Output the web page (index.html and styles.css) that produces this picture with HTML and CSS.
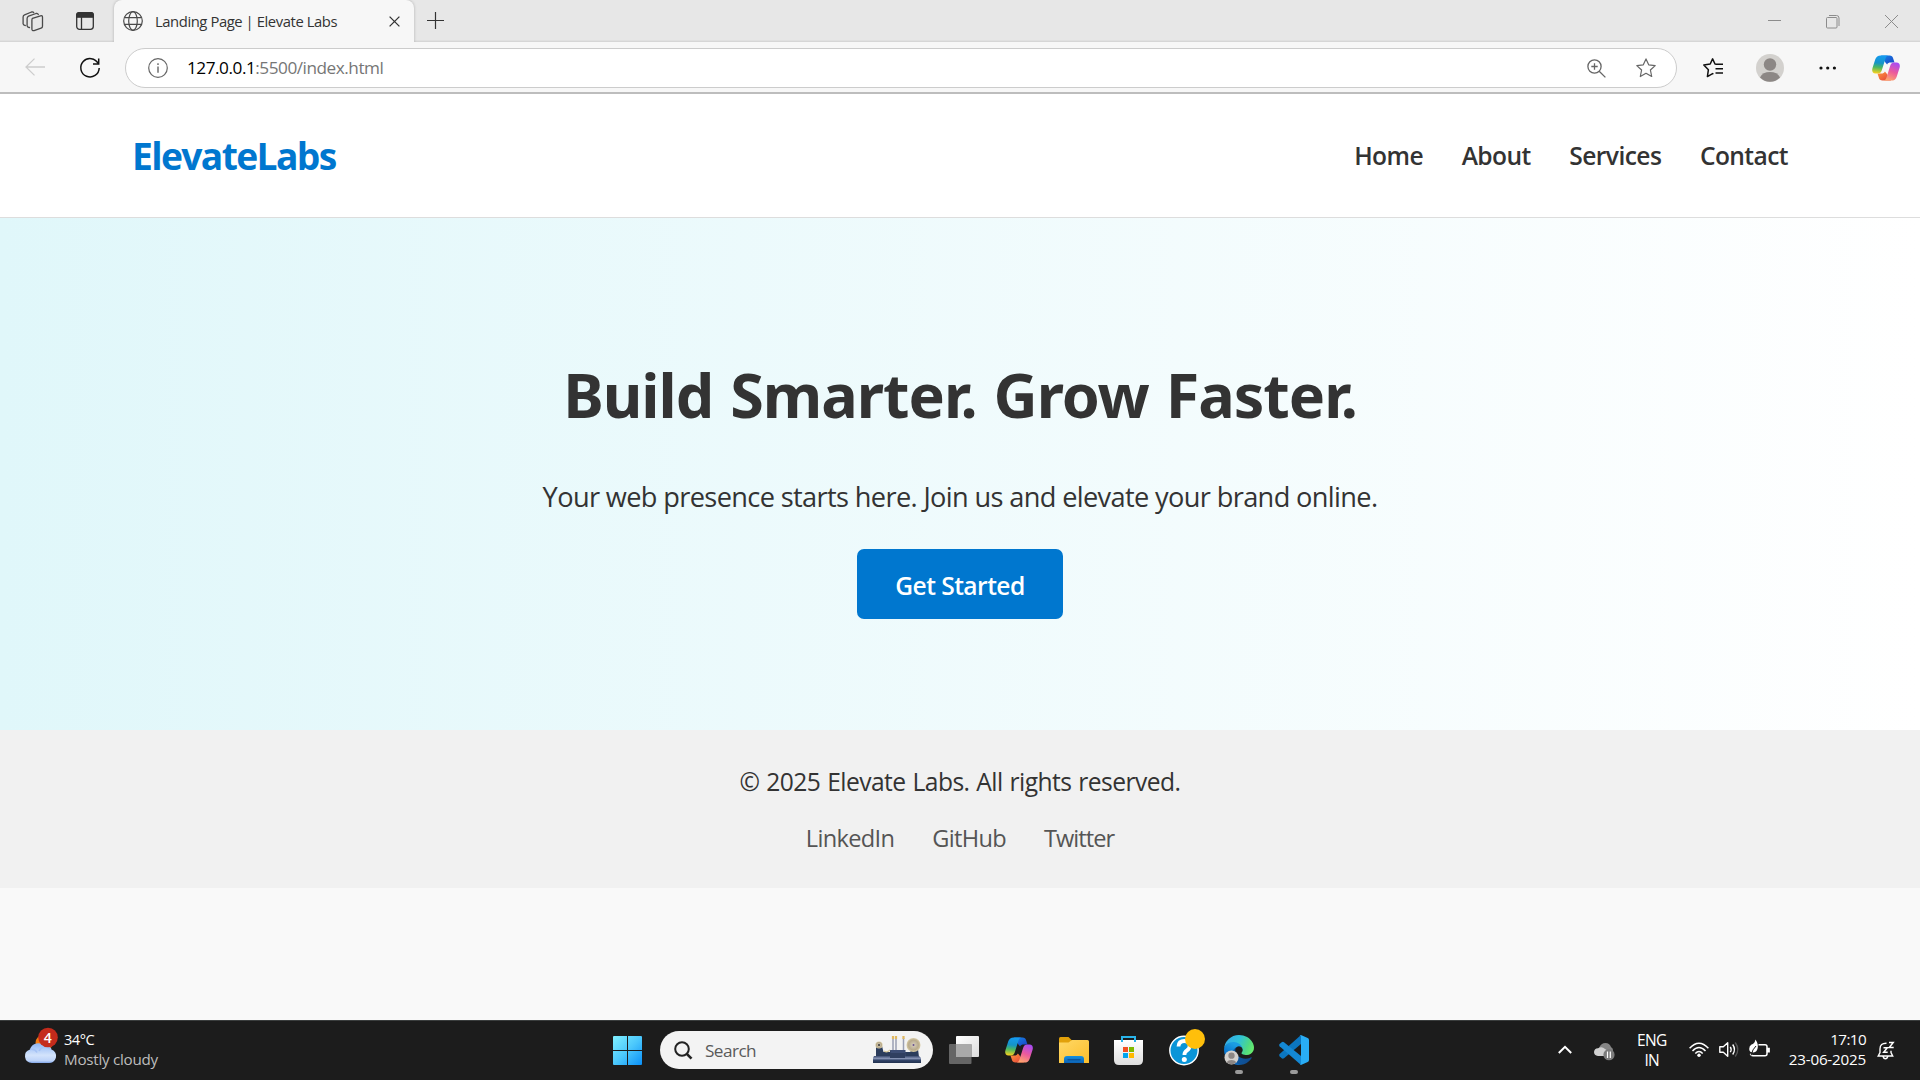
FILE: index.html
```html
<!DOCTYPE html>
<html lang="en">
<head>
<meta charset="utf-8">
<title>Landing Page | Elevate Labs</title>
<link rel="stylesheet" href="styles.css">
</head>
<body>
<svg class="defs" width="0" height="0" aria-hidden="true">
  <defs>
    <linearGradient id="cpA" x1="0.3" y1="0" x2="0.2" y2="1"><stop offset="0" stop-color="#159bf0"/><stop offset=".4" stop-color="#1594c8"/><stop offset=".65" stop-color="#4cb860"/><stop offset="1" stop-color="#ffd21c"/></linearGradient>
    <linearGradient id="cpB" x1="0.7" y1="0" x2="0.3" y2="1"><stop offset="0" stop-color="#a94bf2"/><stop offset=".5" stop-color="#ec5a9c"/><stop offset="1" stop-color="#ffa96b"/></linearGradient>
    <linearGradient id="cpC" x1="0" y1="0" x2="1" y2="1"><stop offset="0" stop-color="#1689e8"/><stop offset="1" stop-color="#1b3fc4"/></linearGradient>
    <linearGradient id="cpD" x1="0" y1="0" x2="1" y2="1"><stop offset="0" stop-color="#ff9a3c"/><stop offset="1" stop-color="#e23b3b"/></linearGradient>
    <symbol id="copilot" viewBox="0 0 28 26">
      <path d="M9 .4h8.600c2 0 3 1 3.500 2.800l1.400 4.400h-3.700c-2 0-3 .6-3.700 2L13 7z" fill="url(#cpC)"/>
      <path d="M19 25.600h-8.600c-2 0-3-1-3.500-2.800L5.500 18.400h3.700c2 0 3-.6 3.700-2L15 19z" fill="url(#cpD)"/>
      <path d="M8.800.4h8c-1.800 0-2.700 1.200-3.300 3l-3.700 11.800c-.8 2.300-1.900 3.300-4.100 3.300H3.500C.4 18.500-.4 16 .5 12.900L3.300 4.300C4.200 1.600 5.800.4 8.800.4z" fill="url(#cpA)"/>
      <path d="M19.200 25.600h-8c1.800 0 2.700-1.200 3.300-3l3.700-11.800c.8-2.300 1.900-3.300 4.100-3.300h2.200c3.100 0 3.900 2.500 3 5.600l-2.800 8.600c-.9 2.700-2.500 3.900-5.500 3.900z" fill="url(#cpB)"/>
    </symbol>
  </defs>
</svg>

<div class="tabstrip">
  <svg class="ic workspaces" width="22" height="22" viewBox="0 0 22 22" fill="none" stroke="#4a4a4a" stroke-width="1.300" stroke-linejoin="round" stroke-linecap="round">
    <path d="M10.500 8.300 18.500 5.800q2-.5 2 1.400v9q0 1.500-1.400 2l-7 2.400q-2 .5-2.200-1.300v-9q0-1.500.6-2z"/>
    <path d="M7.500 17.500q-2 .2-2.400-1.600V8.400q0-1.500 1.500-2.200L14 3.500q1.800-.4 2.300 1"/>
    <path d="M3.300 15.500q-1.800 0-2.200-1.600V6.900q0-1.500 1.500-2.100L9.500 2q1.600-.4 2.200.6"/>
  </svg>
  <svg class="ic vtabs" width="18" height="18" viewBox="0 0 18 18" fill="none" stroke="#333" stroke-width="1.300">
    <rect x=".7" y=".7" width="16.600" height="16.600" rx="2.800"/><path d="M.7 5.200V3Q.7.700 3 .7h12q2.300 0 2.300 2.300v2.200z" fill="#333"/><path d="M5.500 5v12"/>
  </svg>
  <div class="tab">
    <svg class="ic" width="20" height="20" viewBox="0 0 20 20" fill="none" stroke="#4a4a4a" stroke-width="1.200"><circle cx="10" cy="10" r="9.300"/><ellipse cx="10" cy="10" rx="4.300" ry="9.300"/><path d="M1.500 6.600h17M1.500 13.400h17"/></svg>
    <span class="tab-title">Landing Page | Elevate Labs</span>
    <svg class="ic" width="11" height="11" viewBox="0 0 11 11" stroke="#333" stroke-width="1.300"><path d="M.6.600l9.800 9.800M10.400.600.6 10.400"/></svg>
  </div>
  <svg class="ic plus" width="17" height="17" viewBox="0 0 17 17" stroke="#333" stroke-width="1.200"><path d="M8.500 0v17M0 8.500h17"/></svg>
  <div class="winctl">
    <svg width="13" height="14" viewBox="0 0 13 14" stroke="#8c8c8c"><path d="M0 5.500h13"/></svg>
    <svg width="14" height="14" viewBox="0 0 14 14" fill="none" stroke="#8c8c8c"><rect x=".5" y="2.500" width="10.500" height="10.500" rx="1"/><path d="M3 .5h7.500q2.500 0 2.500 2.500V11"/></svg>
    <svg width="13" height="14" viewBox="0 0 13 14" stroke="#8c8c8c"><path d="M0 0l13 13M13 0l-13 13"/></svg>
  </div>
</div>

<div class="toolbar">
  <svg class="ic back" width="20" height="18" viewBox="0 0 20 18" fill="none" stroke="#cdcdcd" stroke-width="1.300"><path d="M20 9H1M9.500.600 1 9l8.500 8.400"/></svg>
  <svg class="ic reload" width="20" height="20" viewBox="0 0 20 20" fill="none" stroke="#111" stroke-width="1.500"><path d="M18.200 5.600A9.200 9.200 0 1 0 19.200 10"/><path d="M18.700.5v5.600H13"/></svg>
  <div class="address">
    <svg class="ic" width="20" height="20" viewBox="0 0 20 20" fill="none" stroke="#666" stroke-width="1.200"><circle cx="10" cy="10" r="9.300"/><path d="M10 8.600v6.200M10 5.300v1.700" stroke-width="1.400"/></svg>
    <span class="url"><span class="host">127.0.0.1</span>:5500/index.html</span>
    <svg class="ic mag" width="19" height="19" viewBox="0 0 19 19" fill="none" stroke="#666" stroke-width="1.300"><circle cx="7.500" cy="7.500" r="6.600"/><path d="M12.200 12.200 18.400 18.400M7.500 4.300v6.400M4.300 7.500h6.400"/></svg>
    <svg class="ic" width="20" height="20" viewBox="0 0 20 20" fill="none" stroke="#666" stroke-width="1.200" stroke-linejoin="round"><path d="M10 .9l2.700 5.900 6.500.8-4.800 4.400 1.300 6.500L10 15.300l-5.700 3.200L5.600 12 .8 7.600l6.500-.8z"/></svg>
  </div>
  <svg class="ic favs" width="20" height="20" viewBox="0 0 20 20" fill="none" stroke="#111" stroke-width="1.500" stroke-linejoin="round"><path d="M13.500 6.300 12 6 9.600.9 7.200 6l-6.400 1 4.600 4.700-1 6.900 5.200-3 .8.400M12.500 6.300H20M12.500 10.700H20M12.500 15H20"/></svg>
  <svg class="ic avatar" width="28" height="28" viewBox="0 0 28 28"><circle cx="14" cy="14" r="14" fill="#d3d1ce"/><circle cx="14" cy="10.500" r="6.200" fill="#8c8785"/><path d="M4 23.600a10.700 8.500 0 0 1 20 0A14 14 0 0 1 4 23.600z" fill="#8c8785"/></svg>
  <svg class="ic dots" width="18" height="4" viewBox="0 0 18 4" fill="#111"><circle cx="2" cy="2" r="1.600"/><circle cx="8.700" cy="2" r="1.600"/><circle cx="15.400" cy="2" r="1.600"/></svg>
  <svg class="ic bar-copilot" width="28" height="26"><use href="#copilot"/></svg>
</div>

<main class="page">
  <header class="site-header">
    <div class="logo">ElevateLabs</div>
    <nav><a>Home</a><a>About</a><a>Services</a><a>Contact</a></nav>
  </header>
  <section class="hero">
    <h1>Build Smarter. Grow Faster.</h1>
    <p>Your web presence starts here. Join us and elevate your brand online.</p>
    <a class="btn">Get Started</a>
  </section>
  <footer class="site-footer">
    <p>© 2025 Elevate Labs. All rights reserved.</p>
    <div class="social"><a>LinkedIn</a><a>GitHub</a><a class="tight">Twitter</a></div>
  </footer>
</main>

<div class="taskbar">
  <div class="weather">
    <svg width="36" height="38" viewBox="0 0 36 38">
      <defs><linearGradient id="cl" x1="0" y1="0" x2="0" y2="1"><stop offset="0" stop-color="#8fb6f5"/><stop offset=".6" stop-color="#d3e3fb"/><stop offset=".88" stop-color="#bdd3f8"/><stop offset="1" stop-color="#7ea4e8"/></linearGradient></defs>
      <circle cx="20" cy="16" r="8.500" fill="#f47c10"/>
      <path d="M8 36a7.500 7 0 0 1-2-13.600A8.300 8.300 0 0 1 20.500 19.500a6.500 6.500 0 0 1 7 3A7 7 0 0 1 24 36z" fill="url(#cl)"/>
      <path d="M6 22.500q5-1 7 3M15 24q4-7 12-2" fill="none" stroke="#a5c2f4" stroke-width="1.500"/>
      <circle cx="24" cy="10.500" r="9.800" fill="#c42b1c"/>
      <text x="23.800" y="15.600" text-anchor="middle" class="badge-n">4</text>
    </svg>
    <div class="w-text"><span class="temp">34°C</span><span class="cond">Mostly cloudy</span></div>
  </div>

  <div class="apps">
    <svg width="29" height="29" viewBox="0 0 29 29">
      <defs><linearGradient id="win" gradientUnits="userSpaceOnUse" x1="0" y1="0" x2="29" y2="29"><stop offset="0" stop-color="#80f0ff"/><stop offset=".5" stop-color="#4cc8fc"/><stop offset="1" stop-color="#0a90f8"/></linearGradient></defs>
      <path d="M1 0h13v14H0V1q0-1 1-1zM15 0h13q1 0 1 1v13H15zM0 15h14v14H1q-1 0-1-1zM15 15h14v13q0 1-1 1H15z" fill="url(#win)"/>
    </svg>
    <div class="search">
      <svg width="19" height="19" viewBox="0 0 19 19" fill="none" stroke="#222" stroke-width="2"><circle cx="8" cy="8" r="6.800"/><path d="M12.800 12.800 17.500 17.700" stroke-width="2.600"/></svg>
      <span>Search</span>
      <svg class="machine" width="50" height="28" viewBox="0 0 50 28">
        <defs><linearGradient id="mb" x1="0" y1="0" x2="0" y2="1"><stop offset="0" stop-color="#3c4c70"/><stop offset=".35" stop-color="#8794b5"/><stop offset=".6" stop-color="#33456a"/><stop offset="1" stop-color="#22324f"/></linearGradient><radialGradient id="md"><stop offset="0" stop-color="#d8cfc0"/><stop offset=".7" stop-color="#b9ab8c"/><stop offset="1" stop-color="#d8cba4"/></radialGradient></defs>
        <path d="M4 10h6l1.500 6H18v-2h15v2h5l3-3h5l1 8H4z" fill="#2c3d5c"/>
        <path d="M21 2v14M24 2v14M31.500 2v14" stroke="#9aa0b4" stroke-width="1.500"/>
        <path d="M21 0v3M24 0v3M31.500 0v3" stroke="#e0b860" stroke-width="2.200"/>
        <rect x="18.500" y="14" width="15" height="8" fill="#3d4d74"/>
        <path d="M2 20h45l2 2v5H1v-5z" fill="url(#mb)"/><path d="M18 17h15v5H18z" fill="#303f60"/>
        <circle cx="7" cy="9" r="3.600" fill="url(#md)"/><circle cx="7" cy="9" r="1" fill="#333"/>
        <circle cx="41.500" cy="9" r="7" fill="url(#md)"/><circle cx="41.500" cy="9" r="1" fill="#66508c"/>
        <path d="M12 15q3 2 6-1" fill="none" stroke="#d6c79a" stroke-width="1.200"/>
      </svg>
    </div>
    <svg class="taskview" width="30" height="28" viewBox="0 0 30 28">
      <defs><linearGradient id="tv" x1="0" y1="0" x2="1" y2="1"><stop offset="0" stop-color="#fff"/><stop offset="1" stop-color="#dcdcdc"/></linearGradient></defs>
      <rect x="7" y="0" width="23" height="21" rx="1" fill="url(#tv)"/><rect x="0" y="8" width="22.500" height="20" rx="1" fill="#656565"/><rect x="7" y="8" width="15.500" height="13" fill="#a9a9a9"/>
    </svg>
    <svg class="app-copilot" width="28" height="26"><use href="#copilot"/></svg>
    <svg class="explorer" width="30" height="27" viewBox="0 0 30 27">
      <defs><linearGradient id="fo" x1="0" y1="0" x2="1" y2="1"><stop offset="0" stop-color="#ffd866"/><stop offset="1" stop-color="#fbbe2c"/></linearGradient><linearGradient id="fb" x1="0" y1="0" x2="0" y2="1"><stop offset="0" stop-color="#1490df"/><stop offset="1" stop-color="#0c62b5"/></linearGradient></defs>
      <path d="M0 1.500Q0 0 1.500 0h8l4 4V9H0z" fill="#e2a10a"/><path d="M0 5.500h9.500L13 3h15.500Q30 3 30 4.500V26H0z" fill="url(#fo)"/><path d="M5 26V22q0-3 3-3h14q3 0 3 3v4z" fill="url(#fb)"/><path d="M8.500 22.800h13" stroke="#0a4d93" stroke-width="1.200"/>
    </svg>
    <svg class="store" width="29" height="29" viewBox="0 0 29 29">
      <defs><linearGradient id="st" x1="0" y1="0" x2="0" y2="1"><stop offset="0" stop-color="#fff"/><stop offset="1" stop-color="#dedede"/></linearGradient></defs>
      <path d="M0 4h29v20q0 5-5 5H5q-5 0-5-5z" fill="url(#st)"/><path d="M8 6V1h13v5" fill="none" stroke="#29b4ea" stroke-width="2"/>
      <path d="M9 11h5v5H9z" fill="#f25022"/><path d="M15 11h5v5h-5z" fill="#7fba00"/><path d="M9 17h5v5H9z" fill="#00a4ef"/><path d="M15 17h5v5h-5z" fill="#ffb900"/>
    </svg>
    <svg class="help" width="36" height="37" viewBox="0 0 36 37">
      <circle cx="15" cy="21.500" r="14.200" fill="#0a95d8" stroke="#fff" stroke-width="1.400"/>
      <path d="M9.500 17.500q.3-5.500 5.800-5.500 5.400 0 5.400 4.700 0 2.800-2.700 4.700-2.600 1.700-2.600 4.600" fill="none" stroke="#fff" stroke-width="3.800"/><circle cx="15.300" cy="30.500" r="2.500" fill="#fff"/>
      <circle cx="26" cy="10" r="10" fill="#ffbf0b"/>
    </svg>
    <div class="running">
      <svg width="30" height="30" viewBox="0 0 256 256">
        <defs><linearGradient id="eg1" x1=".2" y1=".5" x2="1" y2=".6"><stop offset="0" stop-color="#0c59a4"/><stop offset="1" stop-color="#114a8b"/></linearGradient><linearGradient id="eg2" x1=".6" y1=".2" x2=".3" y2=".9"><stop offset="0" stop-color="#1b9de2"/><stop offset=".5" stop-color="#0b7ad0"/><stop offset="1" stop-color="#0a64bc"/></linearGradient><linearGradient id="eg3" x1="0" y1=".3" x2="1" y2=".6"><stop offset="0" stop-color="#35a9e8"/><stop offset=".45" stop-color="#2fc2d8"/><stop offset=".8" stop-color="#4fd983"/><stop offset="1" stop-color="#66eb6e"/></linearGradient></defs>
        <path fill="url(#eg1)" d="M231 190.500c-3.400 1.800-6.900 3.400-10.500 4.700a101.700 101.700 0 0 1-35.900 6.400c-47.300 0-88.500-32.500-88.500-74.300.1-11.400 6.400-21.900 16.400-27.300-42.800 1.800-53.800 46.400-53.800 72.500 0 74 68.100 81.400 82.800 81.400 7.900 0 19.800-2.300 27-4.600l1.300-.4a128.300 128.300 0 0 0 66.600-52.800 4 4 0 0 0-5.400-5.600z"/>
        <path fill="url(#eg2)" d="M105.700 241.400a79.200 79.200 0 0 1-22.700-21.300 80.700 80.700 0 0 1 29.500-120c3.200-1.500 8.500-4.100 15.600-4a32.400 32.400 0 0 1 25.700 13 31.900 31.900 0 0 1 6.300 18.700c0-.2 24.500-79.600-80-79.600-43.900 0-80 41.600-80 78.200a130.200 130.200 0 0 0 12.100 56 128 128 0 0 0 156.400 67 75.500 75.500 0 0 1-62.800-8z"/>
        <path fill="url(#eg3)" d="M152.300 148.900c-.9 1-3.400 2.500-3.400 5.600 0 2.600 1.700 5.100 4.700 7.200 14.400 10 41.500 8.700 41.600 8.700a59.600 59.600 0 0 0 30.300-8.300 61.400 61.400 0 0 0 30.400-52.900c.3-22.400-8-37.300-11.300-43.900C223.500 23.900 177.700 0 128 0A128 128 0 0 0 0 126.200c.5-36.500 36.800-66 80-66 3.500 0 23.500.3 42 10.100 16.300 8.600 24.900 18.900 30.800 29.200 6.200 10.700 7.300 24.100 7.300 29.500 0 5.300-2.700 13.300-7.800 19.900z"/>
        <circle cx="64" cy="192" r="60" fill="#d3d1ce"/><circle cx="64" cy="176" r="27" fill="#8c8785"/><path d="M22 233a48 38 0 0 1 84 0 60 60 0 0 1-84 0z" fill="#8c8785"/>
      </svg>
      <i></i>
    </div>
    <div class="running">
      <svg width="30" height="30" viewBox="0 0 30 30">
        <path d="M22 0 22 9 5 23.200q-1.200.9-2.300 0L.6 21.300q-1.100-1.100 0-2.200z" fill="#0b76c0"/>
        <path d="M22 30V21L5 7.200q-1.200-.9-2.300 0L.6 9q-1.100 1.100 0 2.200z" fill="#1488d4"/>
        <path d="M20.500.5Q21.300-.3 22.500.200l6.200 2.800Q30 3.700 30 5v20q0 1.300-1.300 2l-6.200 2.800q-1.200.5-2-.3 1.500.5 1.500-1V1.500q0-1.500-1.500-1z" fill="#29adf5"/>
      </svg>
      <i></i>
    </div>
  </div>

  <div class="tray">
    <svg width="14" height="9" viewBox="0 0 14 9" fill="none" stroke="#fff" stroke-width="2"><path d="M.8 8 7 1.800 13.200 8"/></svg>
    <svg class="cloud" width="21" height="19" viewBox="0 0 21 19"><path d="M5 6Q7 1 11.500 1q4 0 5.500 4 2.500 1.500 2 4L8 11z" fill="#858585"/><path d="M4 14q-4-.5-4-4 .3-3.500 4-3.800Q8 4 11 7l5 3-4 4z" fill="#d0d0d0"/><circle cx="15" cy="12.700" r="5.600" fill="#7b7b7b"/><path d="M13.500 9.500v6.500M16.300 9.500v6.500" stroke="#fff" stroke-width="1.200"/></svg>
    <div class="lang"><span>ENG</span><span>IN</span></div>
    <svg class="wifi" width="20" height="16" viewBox="0 0 20 16" fill="none" stroke="#fff" stroke-width="1.500"><path d="M.6 6.200Q10-3.800 19.400 6.200M3.500 9Q10 2 16.500 9M6.300 11.600Q10 7.500 13.700 11.600"/><circle cx="10" cy="13.300" r="1.700" fill="#fff" stroke="none"/></svg>
    <svg class="vol" width="20" height="17" viewBox="0 0 20 17" fill="none" stroke="#fff" stroke-width="1.400" stroke-linejoin="round"><path d="M.8 5.700v5.600h3.500l4.400 4V1.700l-4.400 4z"/><path d="M11.300 5.800q1.700 2.700 0 5.400M13.700 3.500q3.500 5 0 10"/><path d="M16.200 1.500q5.200 7 0 14" stroke="#555"/></svg>
    <svg class="batt" width="21" height="18" viewBox="0 0 21 18" fill="none" stroke="#fff" stroke-width="1.500"><path d="M9.500 4.700H16q2 0 2 2v7q0 2-2 2H4q-2 0-2.600-2"/><path d="M18.500 8.500h1.600v3.200h-1.600z" fill="#fff"/><path d="M6.500-.5q3 4.500 2.200 8.500Q8 12 4.500 12.500.2 12.500.2 9T2.500 4.500q3-.5 4-5z" fill="#fff" stroke="none"/><path d="M2 15.500Q3.500 9 7 6" stroke="#1c1c1c" stroke-width="1"/></svg>
    <div class="clock"><span class="time">17:10</span><span class="date">23-06-2025</span></div>
    <svg class="bell" width="18" height="19" viewBox="0 0 18 19" fill="none" stroke="#fff" stroke-width="1.400"><path d="M9.500 2.200Q3 2 3 8v3.500L1.200 15h14.500L14 11.500V9.800M6 15.500q.6 2.200 2.400 2.200t2.400-2.200"/><path d="M6.500 6.700h3.800L6.700 11.200h4M12 1.500h4.200L12.300 6.600h4.400" stroke-width="1.500"/></svg>
  </div>
</div>
</body>
</html>
```
FILE: styles.css
```css
* { box-sizing: border-box; }
body {
  margin: 0;
  height: 1080px;
  overflow: hidden;
  display: flex;
  flex-direction: column;
  font-family: "Open Sans", "Noto Sans", sans-serif;
  color: #333;
  background: #f9f9f9;
}
svg { display: block; flex: none; overflow: visible; }
.defs { position: absolute; }

/* Browser tab strip */
.tabstrip {
  flex: none;
  height: 42px;
  display: flex;
  align-items: flex-start;
  background: #e7e7e7;
  box-shadow: inset 0 -1px 0 #d6d6d6, inset 0 -2px 0 #e0e0e0;
}
.workspaces { margin: 10px 0 0 22px; }
.vtabs { margin: 12px 0 0 32px; }
.tab {
  width: 300px;
  height: 42px;
  margin-left: 20px;
  padding: 0 14px 0 9px;
  display: flex;
  align-items: center;
  background: #f7f7f7;
  border-radius: 8px 8px 0 0;
  box-shadow: 0 0 3px rgba(0, 0, 0, .25);
  clip-path: inset(0 -4px 0 -4px);
}
.tab-title {
  flex: 1;
  margin: -1px 0 0 12px;
  font-size: 14.8px;
  letter-spacing: -.42px;
  line-height: 20px;
  white-space: nowrap;
}
.plus { margin: 12px 0 0 13px; }
.winctl { margin: 15px 22px 0 auto; display: flex; gap: 45px; }

/* Browser toolbar */
.toolbar {
  flex: none;
  height: 52px;
  display: flex;
  align-items: center;
  background: #f7f7f7;
  border-bottom: 2px solid #bdbdbd;
}
.back { margin-left: 25px; }
.reload { margin: 2px 0 0 35px; }
.address {
  width: 1552px;
  height: 40px;
  margin: 2px 0 0 25px;
  padding: 0 20px 0 22px;
  display: flex;
  align-items: center;
  background: #fff;
  border: 1px solid #ccc;
  border-radius: 20px;
}
.url {
  flex: 1;
  margin-left: 19px;
  font-size: 17.2px;
  letter-spacing: -.47px;
  line-height: 24px;
  color: #767676;
}
.host { color: #000; }
.mag { margin-right: 30px; }
.favs { margin: 1px 0 0 26px; }
.avatar { margin: 2px 0 0 33px; }
.dots { margin: 1px 35px 0 35px; }
.bar-copilot { margin-top: 2px; }

/* Landing page */
.page { flex: 1; display: flex; flex-direction: column; }
.site-header {
  height: 124px;
  padding: 0 132px;
  display: flex;
  justify-content: space-between;
  align-items: center;
  background: #fff;
  border-bottom: 1px solid #ddd;
}
.logo {
  font-size: 37.2px;
  font-weight: 700;
  letter-spacing: -1.61px;
  line-height: 50px;
  color: #0077cf;
}
nav { display: flex; gap: 38.6px; font-size: 24.6px; font-weight: 600; letter-spacing: -.58px; line-height: 34px; }
.hero {
  height: 512px;
  padding-top: 141px;
  display: flex;
  flex-direction: column;
  align-items: center;
  background: linear-gradient(to right, #e0f7fa, #fff);
}
h1 {
  margin: 0;
  font-family: "Noto Sans", "Open Sans", sans-serif;
  font-size: 61px;
  letter-spacing: -1px;
  word-spacing: 2px;
  line-height: 72px;
}
.hero p { margin: 44px 0 0; font-size: 27.2px; letter-spacing: -.644px; line-height: 44px; }
.btn {
  width: 206px;
  height: 70px;
  margin-top: 30px;
  border-radius: 7px;
  background: #0077cf;
  color: #fff;
  font-size: 24.6px;
  font-weight: 600;
  letter-spacing: -.54px;
  line-height: 73px;
  text-align: center;
}
.site-footer {
  height: 158px;
  padding-top: 32px;
  text-align: center;
  background: #f1f1f1;
}
.site-footer p { margin: 0; font-size: 24.6px; letter-spacing: -.54px; word-spacing: 1px; line-height: 40px; }
.social {
  margin-top: 16px;
  display: flex;
  justify-content: center;
  gap: 38px;
  font-size: 23.6px;
  letter-spacing: -.68px;
  line-height: 40px;
  color: #555;
}
.tight { letter-spacing: -.95px; }

/* Windows taskbar */
.taskbar {
  flex: none;
  height: 60px;
  display: flex;
  align-items: stretch;
  background: #1c1c1c;
  border-top: 1px solid #3a3d3d;
  color: #fff;
  font-size: 15.2px;
  line-height: 20px;
}
.weather { width: 613px; padding: 6px 0 0 24px; display: flex; }
.badge-n { font: 600 14px "Open Sans", sans-serif; fill: #fff; }
.w-text { margin: 2px 0 0 4px; display: flex; flex-direction: column; }
.temp { font-size: 14.6px; letter-spacing: -.5px; }
.cond { letter-spacing: -.26px; color: #bdbdbd; }
.apps { display: flex; align-items: flex-start; padding-top: 15px; }
.search {
  width: 273px;
  height: 38px;
  margin: -5px 0 0 18px;
  padding: 0 11px 0 14px;
  display: flex;
  align-items: center;
  border-radius: 19px;
  background: #f3f3f3;
  color: #5a5a5a;
  font-size: 17.2px;
  letter-spacing: -.56px;
}
.search span { flex: 1; margin-left: 12px; padding-top: 2px; }
.taskview { margin-left: 16px; }
.app-copilot { margin: 1px 0 0 26px; }
.explorer { margin: 1px 0 0 26px; }
.store { margin-left: 25px; }
.help { margin: -7px 0 0 26px; }
.running { margin: -1px 0 0 19px; display: flex; flex-direction: column; align-items: center; gap: 5px; }
.running + .running { margin-left: 25px; }
.running i { width: 8px; height: 4px; border-radius: 2px; background: #9a9a9a; }
.tray { margin-left: auto; padding-right: 25px; display: flex; align-items: flex-start; }
.tray > svg:first-child { margin-top: 24px; }
.cloud { margin: 21px 0 0 22px; }
.lang { width: 32px; margin: 9px 0 0 21px; display: flex; flex-direction: column; align-items: center; font-size: 15.5px; letter-spacing: -.7px; }
.wifi { margin: 21px 0 0 21px; }
.vol { margin: 20px 0 0 10px; }
.batt { margin: 19px 0 0 10px; }
.clock { margin: 8px 0 0 19px; display: flex; flex-direction: column; align-items: flex-end; }
.time { letter-spacing: -.58px; }
.date { letter-spacing: -.2px; }
.bell { margin: 20px 0 0 11px; }
```
